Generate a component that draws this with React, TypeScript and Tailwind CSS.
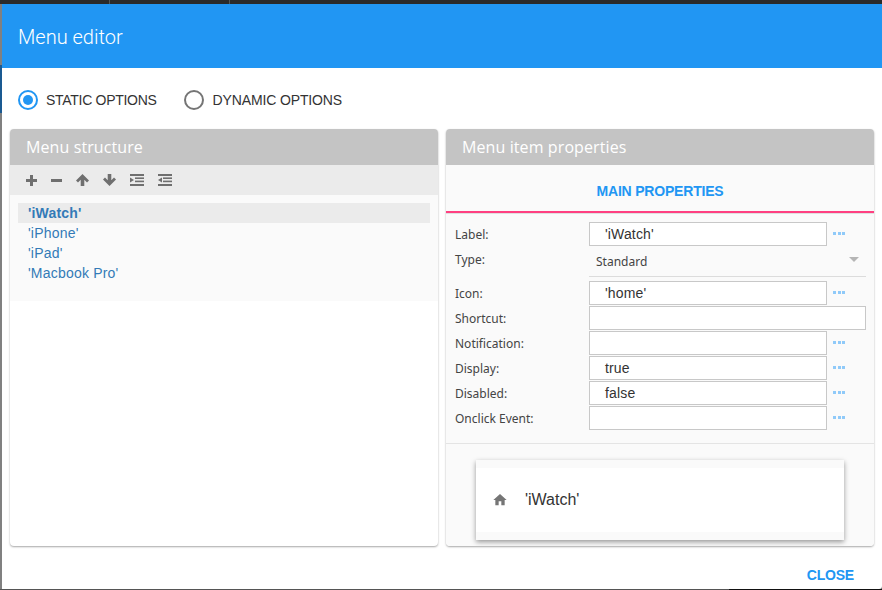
import React from "react";

const sans = "font-['Liberation_Sans',Arial,sans-serif]";
const noto = "font-['Noto_Sans',sans-serif]";
const open = "font-['Open_Sans',sans-serif]";
const roboto = "font-['Roboto',sans-serif]";

const PlusIcon = () => (
  <svg width="11" height="11" viewBox="0 0 11 11" fill="#6f6f6f">
    <path d="M4 0h3v4h4v3H7v4H4V7H0V4h4z" />
  </svg>
);

const MinusIcon = () => (
  <svg width="11" height="11" viewBox="0 0 11 11" fill="#6f6f6f">
    <rect x="0" y="4" width="11" height="3" />
  </svg>
);

const ArrowIcon: React.FC<{ down?: boolean }> = ({ down }) => (
  <svg width="13" height="12" viewBox="0 0 13 12" fill="#6f6f6f" className={down ? "rotate-180" : ""}>
    <path d="M6.5 0L13 6.5l-2 2-2.7-2.7V12H4.7V5.8L2 8.5l-2-2z" />
  </svg>
);

const IndentIcon: React.FC<{ flip?: boolean }> = ({ flip }) => (
  <svg width="14" height="12" viewBox="0 0 14 12" fill="#6f6f6f">
    <rect x="0" y="0" width="14" height="2" />
    <rect x="5" y="3.4" width="9" height="1.6" />
    <rect x="5" y="6.6" width="9" height="1.6" />
    <rect x="0" y="10" width="14" height="2" />
    {flip ? <path d="M0 6L4 3.4v5.2z" /> : <path d="M0 3.4L4 6 0 8.6z" />}
  </svg>
);

const Dots = () => (
  <span className="ml-[6px] flex gap-[1.5px]">
    <span className="h-[3px] w-[3px] bg-[#90caf9]" />
    <span className="h-[3px] w-[3px] bg-[#90caf9]" />
    <span className="h-[3px] w-[3px] bg-[#90caf9]" />
  </span>
);

const PropRow: React.FC<{ label: string; value?: string; wide?: boolean }> = ({ label, value, wide }) => (
  <div className="flex h-[25px] items-center">
    <div className={`w-[134px] pt-[2px] text-xs text-[#444] ${noto}`}>{label}</div>
    <div
      className={`flex h-[24px] items-center border border-[#c8c8c8] bg-white pl-[15px] text-sm tracking-[0.15px] text-[#333] ${sans} ${
        wide ? "w-[277px]" : "w-[238px]"
      }`}
    >
      {value}
    </div>
    {!wide && <Dots />}
  </div>
);

const Panel: React.FC<{ title: string; children: React.ReactNode }> = ({ title, children }) => (
  <div className="flex w-[428px] flex-col overflow-hidden rounded-[4px] bg-white shadow-[0_1px_2px_rgba(0,0,0,0.35)]">
    <div className={`flex h-9 shrink-0 items-center bg-[#c4c4c4] pl-4 text-base font-normal tracking-[0.1px] text-white ${open}`}>
      {title}
    </div>
    {children}
  </div>
);

export default function App() {
  const items = ["'iPhone'", "'iPad'", "'Macbook Pro'"];

  return (
    <div className="flex h-[590px] w-[882px] flex-col overflow-hidden bg-[#6f6f6f]">
      {/* page behind the dialog */}
      <div className="flex h-1 shrink-0 bg-[#2a2a2a]">
        <div className="w-[109px]" />
        <div className="w-px bg-[#555555]" />
        <div className="w-[119px]" />
        <div className="w-px bg-[#555555]" />
      </div>
      <div className="flex h-[585px] shrink-0">
        <div className="flex w-[2px] shrink-0 flex-col">
          <div className="h-[61px] bg-[#808080]" />
          <div className="h-[48px] bg-[#1a5a92]" />
          <div className="grow bg-[#808080]" />
        </div>
        <div className="flex w-[880px] flex-col rounded-br-[3px] bg-white">
          <div className={`flex h-16 shrink-0 items-center bg-[#2196f3] pl-4 pt-[2px] text-xl font-light text-white ${roboto}`}>
            Menu editor
          </div>

          <div className={`flex h-[61px] shrink-0 items-center pl-4 pt-[2px] text-sm text-[#333] ${sans}`}>
            <span className="flex h-5 w-5 items-center justify-center rounded-full border-2 border-[#2196f3]">
              <span className="h-[10px] w-[10px] rounded-full bg-[#2196f3]" />
            </span>
            <span className="ml-2 tracking-[-0.29px]">STATIC OPTIONS</span>
            <span className="ml-[27px] h-5 w-5 rounded-full border-2 border-[#757575]" />
            <span className="ml-[9px] tracking-[-0.13px]">DYNAMIC OPTIONS</span>
          </div>

          <div className="flex h-[417px] shrink-0 gap-2 pl-2">
            <Panel title="Menu structure">
              <div className="flex h-[30px] shrink-0 items-center gap-[14px] bg-[#ebebeb] pl-4">
                <PlusIcon />
                <MinusIcon />
                <ArrowIcon />
                <ArrowIcon down />
                <IndentIcon />
                <IndentIcon flip />
              </div>
              <div className={`h-[106px] shrink-0 bg-[#fafafa] px-2 pt-2 text-sm tracking-[0.2px] text-[#337ab7] ${sans}`}>
                <div className="flex h-5 items-center bg-[#ebebeb] pl-[10px] font-bold">'iWatch'</div>
                {items.map((item) => (
                  <div key={item} className="flex h-5 items-center pl-[10px]">
                    {item}
                  </div>
                ))}
              </div>
            </Panel>

            <Panel title="Menu item properties">
              <div className="flex h-full flex-col bg-[#fafafa]">
                <div className={`flex h-[46px] shrink-0 items-center justify-center pt-[6px] text-sm font-bold tracking-[-0.2px] text-[#2196f3] ${sans}`}>
                  MAIN PROPERTIES
                </div>
                <div className="h-[2px] shrink-0 bg-[#ff4081]" />
                <div className="h-px shrink-0 bg-[#e0e0e0]" />

                <div className="pl-[9px] pt-[7px]">
                  <PropRow label="Label:" value="'iWatch'" />
                  <div className="flex h-[34px]">
                    <div className={`w-[134px] pt-[6px] text-xs text-[#444] ${noto}`}>Type:</div>
                    <div className={`flex h-[31px] w-[277px] items-center justify-between border-b border-[#dcdcdc] pl-[7px] pr-[7px] pt-[2px] text-xs text-[#444] ${noto}`}>
                      Standard
                      <span className="mb-[5px] h-0 w-0 border-x-[5px] border-t-[5px] border-x-transparent border-t-[#b5b5b5]" />
                    </div>
                  </div>
                  <PropRow label="Icon:" value="'home'" />
                  <PropRow label="Shortcut:" wide />
                  <PropRow label="Notification:" />
                  <PropRow label="Display:" value="true" />
                  <PropRow label="Disabled:" value="false" />
                  <PropRow label="Onclick Event:" />
                </div>

                <div className="mt-[13px] h-px shrink-0 bg-[#e4e4e4]" />

                <div className="pl-[30px] pt-4">
                  <div className="flex h-20 w-[368px] flex-col bg-[#fafafa] shadow-[0_2px_5px_rgba(0,0,0,0.4)]">
                    <div className="mt-2 flex h-16 items-center bg-white pl-4">
                      <svg width="16" height="16" viewBox="0 0 24 24" fill="#757575">
                        <path d="M10 20v-6h4v6h5v-8h3L12 3 2 12h3v8z" />
                      </svg>
                      <span className={`ml-[17px] text-base text-[#333] ${sans}`}>'iWatch'</span>
                    </div>
                  </div>
                </div>
              </div>
            </Panel>
          </div>

          <div className="flex grow items-center justify-end pr-[28px] pt-[15px]">
            <span className={`text-sm font-bold tracking-[-0.2px] text-[#2196f3] ${sans}`}>CLOSE</span>
          </div>
        </div>
      </div>
      <div className="flex h-px shrink-0">
        <div className="w-[729px] bg-[#555555]" />
        <div className="grow bg-[#111111]" />
      </div>
    </div>
  );
}
